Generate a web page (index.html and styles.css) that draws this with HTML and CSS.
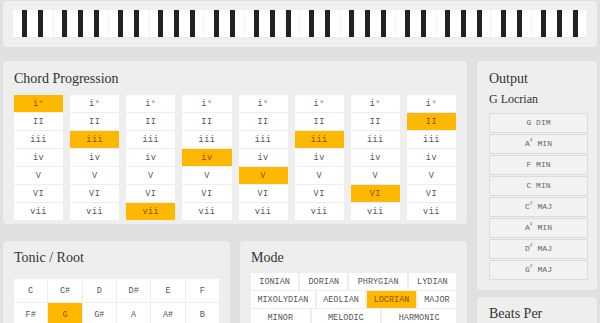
FILE: index.html
```html
<!DOCTYPE html>
<html lang="en">
<head>
  <meta charset="UTF-8">
  <title>Chord Progression</title>
  <meta name="viewport" content="width=device-width, initial-scale=1" />
  <link rel="stylesheet" href="styles.css">
</head>
<body>
  <div class="keys-panel">
    <div id="keyboard" class="keyboard"></div>
  </div>

  <div class="main">
    <div class="left">
      <section class="panel chords">
        <h2>Chord Progression</h2>
        <div id="prog" class="prog"></div>
      </section>

      <div class="row">
        <section class="panel tonic">
          <h2>Tonic / Root</h2>
          <div class="tonic-grid">
            <div class="cell">C</div>
            <div class="cell">C#</div>
            <div class="cell">D</div>
            <div class="cell">D#</div>
            <div class="cell">E</div>
            <div class="cell">F</div>
            <div class="cell">F#</div>
            <div class="cell on">G</div>
            <div class="cell">G#</div>
            <div class="cell">A</div>
            <div class="cell">A#</div>
            <div class="cell">B</div>
          </div>
        </section>

        <section class="panel mode">
          <h2>Mode</h2>
          <div class="mode-list">
            <div class="cell">IONIAN</div>
            <div class="cell">DORIAN</div>
            <div class="cell">PHRYGIAN</div>
            <div class="cell">LYDIAN</div>
            <div class="cell">MIXOLYDIAN</div>
            <div class="cell">AEOLIAN</div>
            <div class="cell on">LOCRIAN</div>
            <div class="cell">MAJOR</div>
            <div class="cell">MINOR</div>
            <div class="cell">MELODIC</div>
            <div class="cell">HARMONIC</div>
          </div>
        </section>
      </div>
    </div>

    <div class="right">
      <section class="panel output">
        <h2>Output</h2>
        <h3>G Locrian</h3>
        <div id="out" class="out-list"></div>
      </section>

      <section class="panel beats">
        <h2>Beats Per</h2>
      </section>
    </div>
  </div>

  <script>
const numerals = ["i°", "II", "iii", "iv", "V", "VI", "vii"];
const picked = [0, 2, 6, 3, 4, 2, 5, 1];
const chords = ["G DIM", "A# MIN", "F MIN", "C MIN", "C# MAJ", "A# MIN", "D# MAJ", "G# MAJ"];

// piano: 6 octaves, black keys laid over the whites
const kb = document.getElementById("keyboard");
for (let o = 0; o < 6; o++) {
  const oct = document.createElement("div");
  oct.className = "octave";
  for (let w = 0; w < 7; w++) {
    const k = document.createElement("div");
    k.className = "white";
    oct.appendChild(k);
  }
  for (let b = 1; b <= 5; b++) {
    const k = document.createElement("div");
    k.className = "black b" + b;
    oct.appendChild(k);
  }
  kb.appendChild(oct);
}

const prog = document.getElementById("prog");
picked.forEach(sel => {
  const col = document.createElement("div");
  col.className = "prog-col";
  numerals.forEach((n, i) => {
    const c = document.createElement("div");
    c.className = i === sel ? "cell on" : "cell";
    c.textContent = n;
    col.appendChild(c);
  });
  prog.appendChild(col);
});

const out = document.getElementById("out");
chords.forEach(ch => {
  const [note, kind] = ch.split(" ");
  const d = document.createElement("div");
  d.className = "out-item";
  d.innerHTML = note[0] + (note[1] === "#" ? "<sup>♯</sup>" : "") + " " + kind;
  out.appendChild(d);
});
  </script>
</body>
</html>
```

FILE: styles.css
```css
body { margin: 0; padding: 1px 3px; background: #e0e0e0; color: #333; font-family: "Liberation Mono", "DejaVu Sans Mono", monospace; overflow: hidden; }
h2 { margin: 0; font-family: "Liberation Serif", serif; font-size: 14px; line-height: 20px; font-weight: normal; color: #333; }
h3 { margin: 3px 0 6px; font-family: "Liberation Serif", serif; font-size: 12px; line-height: 15px; font-weight: normal; color: #333; }

.keys-panel { background: #efefef; border-radius: 3px; padding: 9px 10px 10px; }
.keyboard { display: flex; height: 27px; }
.octave { flex: 1; display: flex; position: relative; }
.white { flex: 1; background: #fff; border-right: 1px solid #f2f2f2; }
.black { position: absolute; top: 0; width: 5px; height: 27px; background: #222; }
.b1 { left: calc(12.5% - 2.5px); }
.b2 { left: calc(29.17% - 2.5px); }
.b3 { left: calc(54.17% - 2.5px); }
.b4 { left: calc(70.83% - 2.5px); }
.b5 { left: calc(87.5% - 2.5px); }

.main { display: flex; gap: 10px; margin-top: 14px; }
.left { width: 464px; display: flex; flex-direction: column; gap: 17px; }
.right { flex: 1; display: flex; flex-direction: column; gap: 7px; }
.row { display: flex; gap: 10px; }

.panel { background: #eeeeee; border-radius: 4px; padding: 7px 11px 4px; }
.chords { padding-top: 8px; }
.chords h2 { margin-bottom: 6px; }

.cell { background: #fff; color: #555; font-size: 8.5px; text-align: center; display: flex; align-items: center; justify-content: center; }
.cell.on { background: #ffb800; color: #8b4c00; }

.prog { display: grid; grid-template-columns: repeat(8, 1fr); column-gap: 7px; }
.prog-col { display: flex; flex-direction: column; gap: 1px; }
.prog-col .cell { height: 17px; letter-spacing: 0.5px; }

.tonic, .mode { flex: 1; height: 120px; }
.tonic h2 { margin-bottom: 11px; }
.tonic-grid { display: grid; grid-template-columns: repeat(6, 1fr); gap: 1px; }
.tonic-grid .cell { height: 23px; }

.mode h2 { margin-bottom: 5px; }
.mode-list { display: flex; flex-wrap: wrap; gap: 1px 2px; }
.mode-list .cell { flex: 1 1 auto; height: 17px; padding: 0 4px; font-size: 8.5px; }

.output { padding: 8px 9px 10px 12px; }
.out-list { display: flex; flex-direction: column; gap: 1px; }
.out-item { height: 18px; line-height: 18px; border: 1px solid #dcdcdc; background: #f2f2f2; color: #666; font-size: 8px; text-align: center; }
.out-item sup { font-size: 6px; line-height: 0; font-family: "DejaVu Sans", sans-serif; }

.beats { padding-left: 12px; height: 60px; }
```
